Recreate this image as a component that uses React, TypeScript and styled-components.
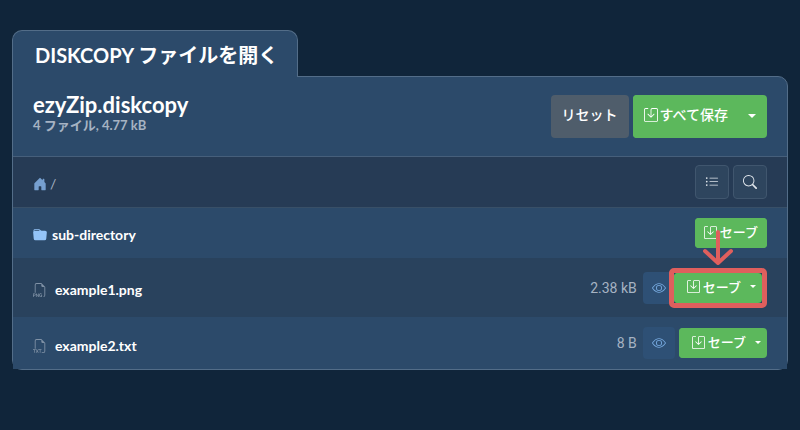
import React from "react";
import styled, { createGlobalStyle } from "styled-components";
import {
  BsEye,
  BsFiletypePng,
  BsFiletypeTxt,
  BsFolderFill,
  BsHouseDoorFill,
  BsListUl,
  BsSave,
  BsSearch,
} from "react-icons/bs";

const Global = createGlobalStyle`
  * { box-sizing: border-box; }
  body {
    margin: 0;
    background: #10253a;
    color: #fff;
    font-family: Lato, "Noto Sans CJK JP", sans-serif;
    font-size: 14px;
    line-height: 20px;
  }
  button { font: inherit; color: inherit; margin: 0; cursor: pointer; }
  svg { display: block; flex: none; }
`;

const edge = "#536d88";
const accent = "#df5f5d";

const Page = styled.main`
  padding: 30px 12px 60px;
`;

const Tab = styled.h1`
  position: relative;
  z-index: 1;
  width: fit-content;
  margin: 0 0 -1px;
  padding: 11px 19px 9px 22px;
  border: 1px solid ${edge};
  border-bottom: 0;
  border-radius: 10px 10px 0 0;
  background: #2c4a6a;
  font-size: 20px;
  line-height: 26px;
  font-weight: 700;
`;

const Panel = styled.section`
  border: 1px solid ${edge};
  border-radius: 0 10px 10px 10px;
  background: #2c4a6a;
`;

const Header = styled.header`
  display: flex;
  align-items: center;
  justify-content: space-between;
  padding: 17px 20px;
`;

const Titles = styled.div`
  padding-bottom: 5px;
`;

const ArchiveName = styled.h2`
  margin: 0;
  font-size: 22px;
  line-height: 22px;
  font-weight: 700;
`;

const Summary = styled.p`
  margin: 0;
  color: #a6b3c3;
  font-size: 13px;
  line-height: 18px;
  font-weight: 700;
`;

const Group = styled.div`
  display: flex;
  align-items: center;
  gap: 4px;
`;

const ResetButton = styled.button`
  height: 43px;
  padding: 0 11px 3px;
  border: 0;
  border-radius: 4px;
  background: #4f5d6b;
  font-weight: 500;
`;

const Split = styled.div<{ $large?: boolean }>`
  display: flex;
  height: ${(p) => (p.$large ? 43 : 30)}px;
  border-radius: 4px;
  background: #5cb85c;
  font-size: ${(p) => (p.$large ? 14 : 13)}px;
`;

const savePadding = {
  large: "0 9px 3px 11px",
  split: "0 3px 2px 13px",
  single: "0 9px 2px 9px",
};

const SaveButton = styled.button<{ $kind: keyof typeof savePadding }>`
  display: flex;
  align-items: center;
  gap: ${(p) => (p.$kind === "large" ? 2 : 3)}px;
  padding: ${(p) => savePadding[p.$kind]};
  border: 0;
  border-radius: 4px;
  background: #5cb85c;
  font-weight: 500;
`;

const CaretButton = styled.button<{ $large?: boolean }>`
  display: flex;
  align-items: center;
  justify-content: center;
  width: ${(p) => (p.$large ? 30 : 18)}px;
  padding: 0 0 2px;
  border: 0;
  background: transparent;

  &::after {
    content: "";
    border: ${(p) => (p.$large ? 4 : 3)}px solid transparent;
    border-top-color: #fff;
    border-bottom: 0;
  }
`;

const Toolbar = styled.nav`
  display: flex;
  align-items: center;
  justify-content: space-between;
  padding: 8px 20px;
  border-top: 1px solid #465f7b;
  border-bottom: 1px solid #384f67;
  background: #263b55;
  color: #a6b3c3;
`;

const Crumbs = styled.div`
  display: flex;
  align-items: center;
  gap: 3px;
  padding-top: 4px;
`;

const HomeLink = styled.a`
  color: #769fcf;
`;

const ToolButton = styled.button`
  display: grid;
  place-items: center;
  width: 34px;
  height: 34px;
  padding: 0;
  border: 1px solid #40566e;
  border-radius: 4px;
  background: #2e455e;
  color: #dfe5eb;
`;

const List = styled.ul`
  margin: 0;
  padding: 0;
  list-style: none;
`;

const Row = styled.li<{ $shaded?: boolean }>`
  display: flex;
  align-items: center;
  justify-content: space-between;
  min-height: ${(p) => (p.$shaded ? 59 : 50)}px;
  padding: ${(p) => (p.$shaded ? 9 : 10)}px 20px;
  background: ${(p) => (p.$shaded ? "#29425d" : "#2c4a6a")};
`;

const FileName = styled.span<{ $folder?: boolean }>`
  display: flex;
  align-items: center;
  gap: ${(p) => (p.$folder ? 5 : 8)}px;
  padding-top: ${(p) => (p.$folder ? 4 : 5)}px;
  font-weight: 700;
  svg { color: ${(p) => (p.$folder ? "#94c4f7" : "#8092a6")}; }
`;

const Size = styled.span`
  padding-right: 2px;
  color: #a6b3c3;
  font-family: Roboto, sans-serif;
`;

const ViewButton = styled.button`
  display: grid;
  place-items: center;
  width: 32px;
  height: 32px;
  padding: 0;
  border: 0;
  border-radius: 4px;
  background: #2e5075;
  color: #76a9df;
`;

const Marked = styled.div`
  position: relative;
  margin-left: -10px;
  border: 5px solid ${accent};
  border-radius: 5px;
`;

const Arrow = styled.svg`
  position: absolute;
  left: 29px;
  top: -43px;
  pointer-events: none;
`;

function Save({ children, kind }: { children: React.ReactNode; kind: keyof typeof savePadding }) {
  return (
    <SaveButton type="button" $kind={kind}>
      <BsSave size={kind === "large" ? 14 : 13} />
      {children}
    </SaveButton>
  );
}

function SplitSave({ file }: { file: string }) {
  return (
    <Split>
      <Save kind="split">セーブ</Save>
      <CaretButton type="button" aria-label={`${file} の保存オプション`} />
    </Split>
  );
}

export default function App() {
  return (
    <>
      <Global />
      <Page>
        <Tab>DISKCOPY ファイルを開く</Tab>
        <Panel>
          <Header>
            <Titles>
              <ArchiveName>ezyZip.diskcopy</ArchiveName>
              <Summary>4 ファイル, 4.77 kB</Summary>
            </Titles>
            <Group>
              <ResetButton type="button">リセット</ResetButton>
              <Split $large>
                <Save kind="large">すべて保存</Save>
                <CaretButton $large type="button" aria-label="保存オプション" />
              </Split>
            </Group>
          </Header>
          <Toolbar>
            <Crumbs>
              <HomeLink href="#" aria-label="ホーム">
                <BsHouseDoorFill size={14} />
              </HomeLink>
              <span>/</span>
            </Crumbs>
            <Group>
              <ToolButton type="button" aria-label="リスト">
                <BsListUl size={14} />
              </ToolButton>
              <ToolButton type="button" aria-label="検索">
                <BsSearch size={14} />
              </ToolButton>
            </Group>
          </Toolbar>
          <List>
            <Row>
              <FileName $folder>
                <BsFolderFill size={14} />
                sub-directory
              </FileName>
              <Split>
                <Save kind="single">セーブ</Save>
              </Split>
            </Row>
            <Row $shaded>
              <FileName>
                <BsFiletypePng size={14} />
                example1.png
              </FileName>
              <Group>
                <Size>2.38 kB</Size>
                <ViewButton type="button" aria-label="example1.png を表示">
                  <BsEye size={14} />
                </ViewButton>
                <Marked>
                  <SplitSave file="example1.png" />
                  <Arrow
                    width="30"
                    height="36"
                    viewBox="0 0 30 36"
                    fill="none"
                    stroke={accent}
                    strokeWidth="4"
                    strokeLinecap="round"
                    strokeLinejoin="round"
                  >
                    <path d="M15 2v31M2 21l13 12 13-12" />
                  </Arrow>
                </Marked>
              </Group>
            </Row>
            <Row>
              <FileName>
                <BsFiletypeTxt size={14} />
                example2.txt
              </FileName>
              <Group>
                <Size>8 B</Size>
                <ViewButton type="button" aria-label="example2.txt を表示">
                  <BsEye size={14} />
                </ViewButton>
                <SplitSave file="example2.txt" />
              </Group>
            </Row>
          </List>
        </Panel>
      </Page>
    </>
  );
}
